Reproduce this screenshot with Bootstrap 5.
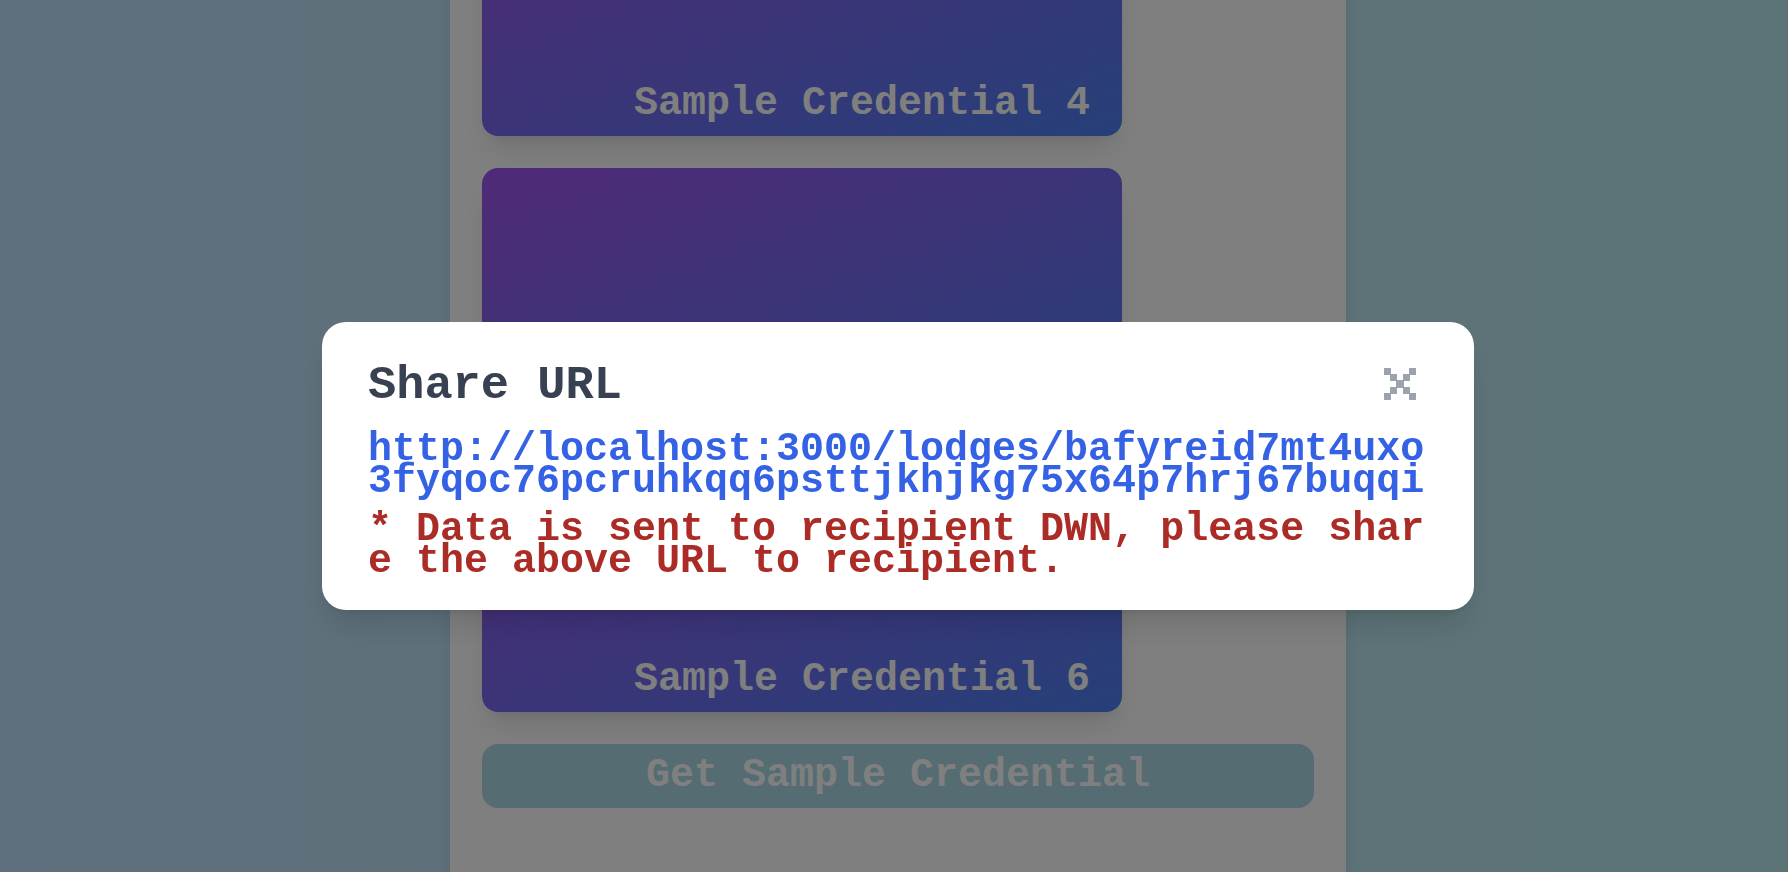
<!DOCTYPE html>
<html lang="en">
<head>
<meta charset="utf-8">
<meta name="viewport" content="width=device-width, initial-scale=1">
<title>Share URL</title>
<link rel="stylesheet" href="https://cdn.jsdelivr.net/npm/bootstrap@5.3.0/dist/css/bootstrap.min.css">
<style>
body {
  padding-left: 8px;
  font-family: "Liberation Mono", monospace;
  font-size: 40px;
  font-weight: 700;
  line-height: 32px;
  background: linear-gradient(to right, #bfdefa, #b9e9ec);
}
.wallet {
  width: 100%;
  max-width: 896px;
  padding: 32px 32px 64px;
  gap: 32px;
  box-shadow: 0 8px 16px rgba(0, 0, 0, .08);
}
.credential {
  width: 100%;
  max-width: 640px;
  height: 256px;
  padding: 16px 32px;
  border-radius: 16px;
  background: linear-gradient(to bottom right, #a153ef, #4c80f0);
  box-shadow: 0 20px 30px -6px rgba(0, 0, 0, .1), 0 8px 12px -8px rgba(0, 0, 0, .1);
}
.btn-get {
  padding: 16px;
  border: 0;
  border-radius: 16px;
  background: #a8d8e4;
  color: #fff;
  font-size: inherit;
  font-weight: inherit;
  line-height: inherit;
}
.backdrop-half { padding: 60px 0 0 8px; background: rgba(0, 0, 0, .5); z-index: 1050; }
.share-dialog { max-width: 1152px; margin: 0 auto; }
.share-card {
  padding: 34px 46px 30px;
  min-height: 288px;
  border-radius: 24px;
  box-shadow: 0 20px 30px -6px rgba(0, 0, 0, .12), 0 8px 12px -8px rgba(0, 0, 0, .12);
}
.share-heading { height: 60px; margin-bottom: 18px; }
.share-title { font-size: 47px; font-weight: 700; line-height: 60px; color: #374151; }
.close-x { width: 56px; height: 56px; padding: 12px; border: 0; background: none; color: #9ca3af; }
.share-link { color: #3562e4; word-break: break-all; text-decoration: none; }
.share-note { color: #ab2c26; word-break: break-all; margin: 16px 0 0; }
</style>
<script src="https://cdn.jsdelivr.net/npm/bootstrap@5.3.0/dist/js/bootstrap.bundle.min.js"></script>
</head>
<body class="vh-100 overflow-hidden d-flex flex-column justify-content-end align-items-center">
<main class="wallet bg-white d-flex flex-column flex-shrink-0">
  <article class="credential" aria-label="Sample Credential 3"></article>
  <article class="credential d-flex align-items-end justify-content-end text-white">Sample Credential 4</article>
  <article class="credential" aria-label="Sample Credential 5"></article>
  <article class="credential d-flex align-items-end justify-content-end text-white">Sample Credential 6</article>
  <button type="button" class="btn-get">Get Sample Credential</button>
</main>
<div class="backdrop-half position-fixed top-0 start-0 w-100 h-100 d-flex align-items-center" role="dialog" aria-modal="true" aria-labelledby="shareTitle">
  <div class="share-dialog w-100">
    <div class="share-card bg-white">
      <div class="share-heading d-flex justify-content-between align-items-start">
        <h1 id="shareTitle" class="share-title m-0">Share URL</h1>
        <button type="button" class="close-x" aria-label="Close">
          <svg class="d-block" width="32" height="32" viewBox="0 0 32 32" fill="currentColor" shape-rendering="crispEdges"><path d="M0 0h7v7h-7zM25 0h7v7h-7zM6 6h7v7h-7zM19 6h7v7h-7zM12 12h8v8h-8zM6 19h7v7h-7zM19 19h7v7h-7zM0 25h7v7h-7zM25 25h7v7h-7z"/></svg>
        </button>
      </div>
      <a class="share-link d-block" href="http://localhost:3000/lodges/bafyreid7mt4uxo3fyqoc76pcruhkqq6psttjkhjkg75x64p7hrj67buqqi">http://localhost:3000/lodges/bafyreid7mt4uxo3fyqoc76pcruhkqq6psttjkhjkg75x64p7hrj67buqqi</a>
      <p class="share-note">* Data is sent to recipient DWN, please share the above URL to recipient.</p>
    </div>
  </div>
</div>
</body>
</html>
